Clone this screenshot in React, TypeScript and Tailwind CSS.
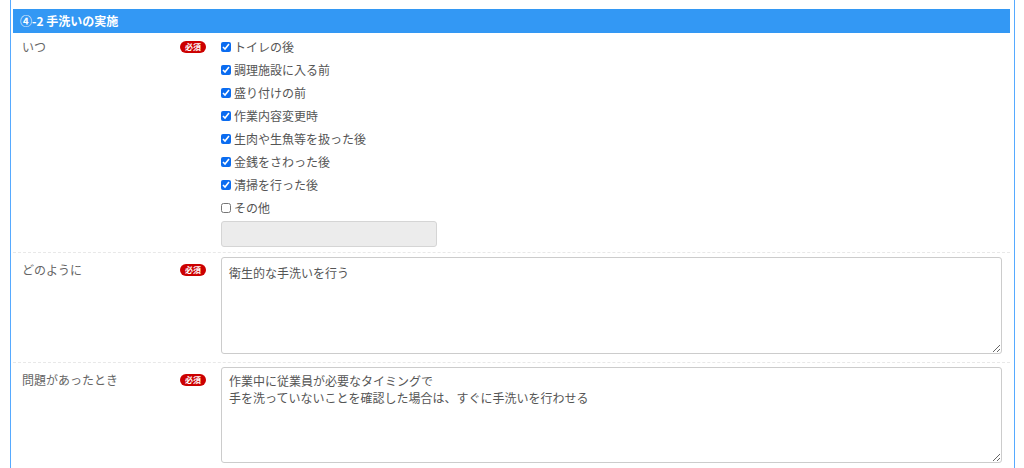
const FONT = { fontFamily: '"Noto Sans CJK JP", "Noto Sans", sans-serif' }

const TIMINGS: { label: string; checked: boolean }[] = [
  { label: "トイレの後", checked: true },
  { label: "調理施設に入る前", checked: true },
  { label: "盛り付けの前", checked: true },
  { label: "作業内容変更時", checked: true },
  { label: "生肉や生魚等を扱った後", checked: true },
  { label: "金銭をさわった後", checked: true },
  { label: "清掃を行った後", checked: true },
  { label: "その他", checked: false },
]

function Required() {
  return (
    <span className="inline-flex h-[12px] w-[26px] items-center justify-center rounded-full bg-[#cc0000] text-[8px] font-bold leading-none text-white">
      必須
    </span>
  )
}

function Row({
  label,
  children,
  className,
  labelTop,
}: {
  label: string
  children: React.ReactNode
  className: string
  labelTop: string
}) {
  return (
    <div className={`flex border-b border-dashed border-[#e8e8e8] pl-[9px] pr-[7px] ${className}`}>
      {/* label + badge column, 199px wide in total */}
      <div className={`flex h-[17px] w-[199px] shrink-0 items-center ${labelTop}`}>
        <div className="w-[158px] shrink-0 text-[12px] leading-[17px] text-[#666]">{label}</div>
        <Required />
      </div>
      <div className="min-w-0 flex-1">{children}</div>
    </div>
  )
}

export default function App() {
  return (
    <div className="h-[468px] w-[1024px] overflow-hidden bg-white" style={FONT}>
      <div className="ml-[10px] h-full w-[1005px] border-x border-[#56aaff] pl-[2px] pr-[4px] pt-[9px]">
        <div className="flex h-[24px] items-center bg-[#3398f4] pl-[7px] text-[12px] font-bold text-white">
          ④-2 手洗いの実施
        </div>

        <Row label="いつ" className="pt-[2px] pb-[5px]" labelTop="mt-[3px]">
          <div className="flex flex-col">
            {TIMINGS.map((t) => (
              <label key={t.label} className="flex h-[23px] items-center text-[12px] text-[#555]">
                <input
                  type="checkbox"
                  defaultChecked={t.checked}
                  className="m-0 mr-[3px] h-[10px] w-[10px] accent-[#0b6cf0]"
                />
                {t.label}
              </label>
            ))}
          </div>
          <div className="mt-[2px] h-[26px] w-[216px] rounded-[3px] border border-[#d5d5d5] bg-[#ececec]" />
        </Row>

        <Row label="どのように" className="pt-[4px] pb-[8px]" labelTop="mt-[4px]">
          <textarea
            defaultValue="衛生的な手洗いを行う"
            className="block h-[97px] w-[781px] rounded-[3px] border border-[#cccccc] px-[7px] py-[6px] text-[12px] leading-[17px] text-[#555] outline-none"
            style={FONT}
          />
        </Row>

        <Row label="問題があったとき" className="pt-[4px] pb-[8px] border-b-0" labelTop="mt-[4px]">
          <textarea
            defaultValue={"作業中に従業員が必要なタイミングで\n手を洗っていないことを確認した場合は、すぐに手洗いを行わせる"}
            className="block h-[96px] w-[781px] rounded-[3px] border border-[#cccccc] px-[7px] py-[4px] text-[12px] leading-[17px] text-[#555] outline-none"
            style={FONT}
          />
        </Row>
      </div>
    </div>
  )
}
